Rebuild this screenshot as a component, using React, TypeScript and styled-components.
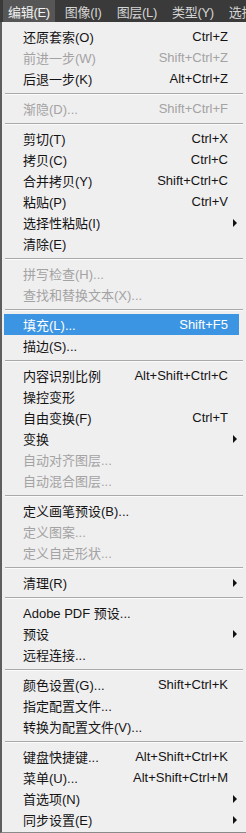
import { createGlobalStyle } from "styled-components";
import styled from "styled-components";

type Entry =
  | "sep"
  | {
      label: string;
      shortcut?: string;
      disabled?: boolean;
      sub?: boolean;
      active?: boolean;
    };

const entries: Entry[] = [
  { label: "还原套索(O)", shortcut: "Ctrl+Z" },
  { label: "前进一步(W)", shortcut: "Shift+Ctrl+Z", disabled: true },
  { label: "后退一步(K)", shortcut: "Alt+Ctrl+Z" },
  "sep",
  { label: "渐隐(D)...", shortcut: "Shift+Ctrl+F", disabled: true },
  "sep",
  { label: "剪切(T)", shortcut: "Ctrl+X" },
  { label: "拷贝(C)", shortcut: "Ctrl+C" },
  { label: "合并拷贝(Y)", shortcut: "Shift+Ctrl+C" },
  { label: "粘贴(P)", shortcut: "Ctrl+V" },
  { label: "选择性粘贴(I)", sub: true },
  { label: "清除(E)" },
  "sep",
  { label: "拼写检查(H)...", disabled: true },
  { label: "查找和替换文本(X)...", disabled: true },
  "sep",
  { label: "填充(L)...", shortcut: "Shift+F5", active: true },
  { label: "描边(S)..." },
  "sep",
  { label: "内容识别比例", shortcut: "Alt+Shift+Ctrl+C" },
  { label: "操控变形" },
  { label: "自由变换(F)", shortcut: "Ctrl+T" },
  { label: "变换", sub: true },
  { label: "自动对齐图层...", disabled: true },
  { label: "自动混合图层...", disabled: true },
  "sep",
  { label: "定义画笔预设(B)..." },
  { label: "定义图案...", disabled: true },
  { label: "定义自定形状...", disabled: true },
  "sep",
  { label: "清理(R)", sub: true },
  "sep",
  { label: "Adobe PDF 预设..." },
  { label: "预设", sub: true },
  { label: "远程连接..." },
  "sep",
  { label: "颜色设置(G)...", shortcut: "Shift+Ctrl+K" },
  { label: "指定配置文件..." },
  { label: "转换为配置文件(V)..." },
  "sep",
  { label: "键盘快捷键...", shortcut: "Alt+Shift+Ctrl+K" },
  { label: "菜单(U)...", shortcut: "Alt+Shift+Ctrl+M" },
  { label: "首选项(N)", sub: true },
  { label: "同步设置(E)", sub: true },
];

const topMenus = ["编辑(E)", "图像(I)", "图层(L)", "类型(Y)", "选择(S)"];

function App() {
  return (
    <>
      <GlobalStyle />
      <Container>
        <MenuBar>
          {topMenus.map((m, i) => (
            <TopItem key={m} $open={i === 0}>
              {m}
            </TopItem>
          ))}
        </MenuBar>
        <Dropdown>
          {entries.map((e, i) =>
            e === "sep" ? (
              <Separator key={"s" + i} />
            ) : (
              <Row key={e.label} $active={e.active} $disabled={e.disabled}>
                <Label>{e.label}</Label>
                <Shortcut>{e.shortcut}</Shortcut>
                <ArrowCell>{e.sub ? <Arrow /> : null}</ArrowCell>
              </Row>
            )
          )}
        </Dropdown>
      </Container>
    </>
  );
}

export default App;

const GlobalStyle = createGlobalStyle`
  body {
    margin: 0;
    background: #f0eff0;
    font-family: "Liberation Sans", "Noto Sans CJK SC", sans-serif;
  }
`;

const Container = styled.div`
  width: 246px;
  height: 833px;
  overflow: hidden;
`;

const MenuBar = styled.div`
  height: 22px;
  background: #3a3a3a;
  display: flex;
  align-items: stretch;
  padding-left: 3px;
  white-space: nowrap;
  overflow: hidden;
`;

const TopItem = styled.div<{ $open?: boolean }>`
  flex-shrink: 0;
  display: flex;
  align-items: center;
  padding: 0 5px;
  margin-right: 5px;
  font-size: 13px;
  letter-spacing: -0.3px;
  color: ${(p) => (p.$open ? "#f2f2f2" : "#d4d4d4")};
  background: ${(p) => (p.$open ? "#565656" : "transparent")};
`;

const Dropdown = styled.div`
  background: #f0eff0;
  border-left: 2px solid #5e5e5e;
  border-bottom: 1px solid #8a8a8a;
  padding: 4px 0 2px 0;
`;

const Row = styled.div<{ $active?: boolean; $disabled?: boolean }>`
  height: 21px;
  margin: 0 7px 0 2px;
  padding-left: 19px;
  display: grid;
  grid-template-columns: 1fr auto 11px;
  align-items: center;
  font-size: 13px;
  white-space: nowrap;
  background: ${(p) => (p.$active ? "#3c95e2" : "transparent")};
  color: ${(p) => (p.$active ? "#ffffff" : p.$disabled ? "#a3a3a3" : "#141414")};
`;

const Label = styled.span`
  overflow: hidden;
`;

const Shortcut = styled.span`
  text-align: right;
`;

const ArrowCell = styled.span`
  display: flex;
  align-items: center;
  padding-left: 5px;
`;

const Arrow = styled.span`
  width: 0;
  height: 0;
  border-top: 4px solid transparent;
  border-bottom: 4px solid transparent;
  border-left: 4px solid #111111;
`;

const Separator = styled.div`
  height: 9px;
  margin: 0 3px;
  display: flex;
  align-items: center;

  &::before {
    content: "";
    flex: 1;
    height: 1px;
    background: #a9a9a9;
    box-shadow: 0 1px 0 #fbfbfb;
  }
`;
